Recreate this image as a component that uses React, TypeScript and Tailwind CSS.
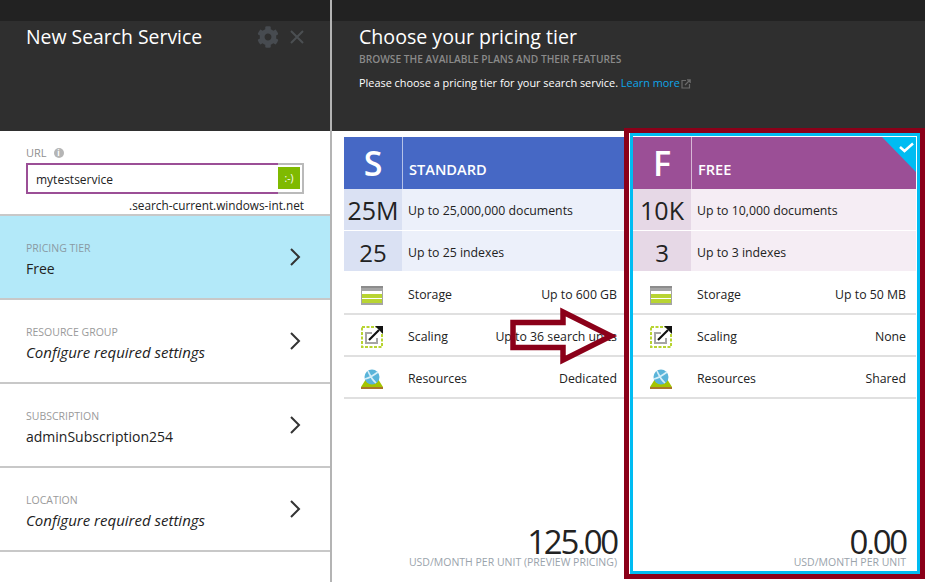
import { FaCog } from 'react-icons/fa'

const font = "font-['Open_Sans',sans-serif]"

function Chevron() {
  return (
    <svg width="14" height="20" viewBox="0 0 14 20" className="shrink-0">
      <path d="M3 2 L11 10 L3 18" fill="none" stroke="#333" strokeWidth="2" />
    </svg>
  )
}

function NavRow({ label, value, italic, active }: { label: string, value: string, italic?: boolean, active?: boolean }) {
  return (
    <div className={`h-[84px] flex items-center justify-between pl-[26px] pr-[28px] border-b-2 border-[#c8c8c8] ${active ? 'bg-[#b3e9f9]' : 'bg-white'}`}>
      <div className={italic ? 'pt-[5px]' : 'pt-[6px]'}>
        <div className={`text-[10.5px] leading-[14px] ${active ? 'text-[#8a9aa3]' : 'text-[#9a9a9a]'}`}>{label}</div>
        <div className={`leading-[20px] text-[#222] ${italic ? 'mt-[3px] italic text-[15px]' : 'mt-[4px] text-[14px]'}`}>{value}</div>
      </div>
      <Chevron />
    </div>
  )
}

function StorageIcon() {
  return (
    <svg width="22" height="19" viewBox="0 0 22 19">
      <rect width="22" height="19" fill="#a5a5a5" />
      <rect width="22" height="2" fill="#8c8c8c" />
      <rect x="1" y="5" width="20" height="3" fill="#fff" />
      <rect x="1" y="8" width="20" height="4" fill="#b8d432" />
      <rect x="1" y="12" width="20" height="1" fill="#fff" />
      <rect x="1" y="13" width="20" height="4" fill="#b8d432" />
    </svg>
  )
}

function ScalingIcon() {
  return (
    <svg width="22" height="22" viewBox="0 0 22 22">
      <rect x="1" y="1" width="20" height="20" fill="none" stroke="#b8d432" strokeWidth="2" strokeDasharray="3 1.5" />
      <path d="M11 7 H5 V17 H16 V12" fill="none" stroke="#a5a5a5" strokeWidth="2" />
      <path d="M8 14 L18 4" stroke="#111" strokeWidth="2.2" />
      <path d="M14 0 H22 V8 Z" fill="#111" />
    </svg>
  )
}

function ResourceIcon() {
  return (
    <svg width="22" height="20" viewBox="0 0 22 20">
      <path d="M0 18 L5 10 H17 L22 18 Z" fill="#a4c400" />
      <rect y="18" width="22" height="2" fill="#a9762a" />
      <circle cx="11" cy="8" r="7.500" fill="#59b4d9" />
      <path d="M7 2 C9 6 10 10 15 14 M4 10 C9 9 13 6 17 3" stroke="#d6eef8" strokeWidth="1.600" fill="none" />
    </svg>
  )
}

function Feature({ icon, label, value, pad }: { icon: React.ReactNode, label: string, value: string, pad: string }) {
  return (
    <div className={`h-[42px] pt-[4px] flex items-center border-b-2 border-[#e0e0e0] ${pad}`}>
      <div className="w-[58px] pr-[2px] flex justify-center shrink-0">{icon}</div>
      <div className="pl-[6px] text-[12.300px]">{label}</div>
      <div className="ml-auto text-[12.300px]">{value}</div>
    </div>
  )
}

function Quota({ big, text, tint, cell, h, size }: { big: string, text: string, tint: string, cell: string, h: string, size: string }) {
  return (
    <div className={`flex items-center border-b border-white ${h} ${tint}`}>
      <div className={`w-[58px] h-full pt-[3px] shrink-0 flex items-center justify-center ${size} ${cell}`}>{big}</div>
      <div className="pl-[6px] pt-[4px] text-[12.300px]">{text}</div>
    </div>
  )
}

function Tier({ letter, name, bg, tint, cell, big1, big2, docs, idx, storage, scaling, resources, price, unit, pad }: {
  letter: string, name: string, bg: string, tint: string, cell: string, big1: string, big2: string, docs: string, idx: string,
  storage: string, scaling: string, resources: string, price: string, unit: string, pad: string
}) {
  return (
    <div className="h-full flex flex-col text-[#222]">
      <div className={`h-[52px] shrink-0 flex text-white ${bg}`}>
        <div className="w-[59px] pb-[1px] flex items-center justify-center text-[34px] leading-none font-semibold border-r border-white/60">{letter}</div>
        <div className="pl-[6px] pt-[23px] text-[14.600px] leading-[18px] font-semibold">{name}</div>
      </div>
      <Quota big={big1} text={docs} tint={tint} cell={cell} h="h-[42px]" size="text-[25px]" />
      <Quota big={big2} text={idx} tint={tint} cell={cell} h="h-[41px]" size="text-[24px]" />
      <div className="pt-[1px]">
        <Feature icon={<StorageIcon />} label="Storage" value={storage} pad={pad} />
        <Feature icon={<ScalingIcon />} label="Scaling" value={scaling} pad={pad} />
        <Feature icon={<ResourceIcon />} label="Resources" value={resources} pad={pad} />
      </div>
      <div className={`mt-auto pb-[2px] text-right ${pad}`}>
        <div className="text-[33px] leading-[26px] tracking-[-2.200px] font-medium">{price}</div>
        <div className="text-[10.500px] leading-[14px] text-[#9aa3ab]">{unit}</div>
      </div>
    </div>
  )
}

export default function App() {
  return (
    <div className={`w-[925px] h-[582px] overflow-hidden bg-white flex ${font}`}>
      <div className="w-[332px] shrink-0 border-r-2 border-[#b4b4b4] flex flex-col">
        <div className="h-[21px] bg-[#222222]" />
        <div className="h-[110px] bg-[#2f2f2f] pl-[26px] pr-[26px] flex items-start justify-between">
          <div className="text-[19.400px] leading-[30px] text-white mt-[1px]">New Search Service</div>
          <div className="flex items-center gap-[11px] mt-[5px]">
            <FaCog size={22} color="#474b50" />
            <svg width="14" height="14" viewBox="0 0 14 14">
              <path d="M1 1 L13 13 M13 1 L1 13" stroke="#4b4f52" strokeWidth="2" />
            </svg>
          </div>
        </div>
        <div className="h-[85px] px-[26px] pt-[14px] border-b-2 border-[#c8c8c8]">
          <div className="flex items-center gap-[7px] text-[11px] leading-[16px] text-[#8f8f8f]">
            URL
            <span className="w-[10px] h-[10px] rounded-full bg-[#b5b5b5] text-white text-[8px] leading-[10px] text-center font-bold">i</span>
          </div>
          <div className="mt-[2px] h-[31px] w-[278px] flex">
            <div className="w-[252px] pl-[8px] border-2 border-r-0 border-[#9b4f96] text-[12px] leading-[29px] text-[#222]">mytestservice</div>
            <div className="w-[26px] border-2 border-l-0 border-[#bababa] pt-[2px]">
              <div className="w-[22px] h-[22px] bg-[#7fba00] text-white text-[10px] text-center leading-[22px]">:-)</div>
            </div>
          </div>
          <div className="w-[278px] mt-[1px] text-right text-[11.800px] leading-[20px] text-[#222]">.search-current.windows-int.net</div>
        </div>
        <NavRow label="PRICING TIER" value="Free" active />
        <NavRow label="RESOURCE GROUP" value="Configure required settings" italic />
        <NavRow label="SUBSCRIPTION" value="adminSubscription254" />
        <NavRow label="LOCATION" value="Configure required settings" italic />
      </div>

      <div className="flex-1 relative flex flex-col">
        <div className="h-[21px] bg-[#222222]" />
        <div className="h-[110px] bg-[#2f2f2f] pl-[27px] text-white">
          <div className="text-[19.600px] leading-[30px] mt-[1px]">Choose your pricing tier</div>
          <div className="text-[10.200px] leading-[14px] text-[#8a8a8a] font-semibold">BROWSE THE AVAILABLE PLANS AND THEIR FEATURES</div>
          <div className="text-[10.900px] leading-[16px] mt-[9px]">
            Please choose a pricing tier for your search service. <span className="text-[#0ea5e9]">Learn more</span>
            <svg width="10" height="10" viewBox="0 0 10 10" className="inline ml-[1px]">
              <path d="M5 1.500H1V9H8.500V5M4 6 L9 1 M6 .8H9.200V4" fill="none" stroke="#6a6a6a" strokeWidth="1.200" />
            </svg>
          </div>
        </div>
        <div className="flex-1 flex pl-[12px]">
          <div className="w-[280px] shrink-0 pt-[6px] pb-[11px]">
            <Tier letter="S" name="STANDARD" bg="bg-[#4668c5]" tint="bg-[#ecf0fa]" cell="bg-[#dae1f3]" big1="25M" big2="25"
              docs="Up to 25,000,000 documents" idx="Up to 25 indexes" storage="Up to 600 GB" scaling="Up to 36 search units" resources="Dedicated"
              price="125.00" unit="USD/MONTH PER UNIT (PREVIEW PRICING)" pad="pr-[7px]" />
          </div>
          <div className="w-[301px] h-[451px] -mt-[3px] border-[5px] border-[#8b0019] shrink-0 pl-[1px]">
            <div className="h-full border-[3px] border-[#00bcf2] relative pt-[1px] pr-[1px]">
              <Tier letter="F" name="FREE" bg="bg-[#9b4f96]" tint="bg-[#f5edf4]" cell="bg-[#e6d8e6]" big1="10K" big2="3"
                docs="Up to 10,000 documents" idx="Up to 3 indexes" storage="Up to 50 MB" scaling="None" resources="Shared"
                price="0.00" unit="USD/MONTH PER UNIT" pad="pr-[10px]" />
              <svg width="34" height="35" viewBox="0 0 34 35" className="absolute top-[1px] right-[1px]">
                <path d="M0 0 H34 V35 Z" fill="#00bcf2" />
                <path d="M18 10 L22.500 14 L31 6.500" fill="none" stroke="#fff" strokeWidth="2.500" />
              </svg>
            </div>
          </div>
        </div>
        <svg width="112" height="62" viewBox="0 0 112 62" className="absolute left-[177px] top-[305px]">
          <path d="M4 17.500 H54 V7 L102 31 L54 55 V42.500 H4 Z" fill="none" stroke="#8b0019" strokeWidth="5.500" />
        </svg>
      </div>
    </div>
  )
}
